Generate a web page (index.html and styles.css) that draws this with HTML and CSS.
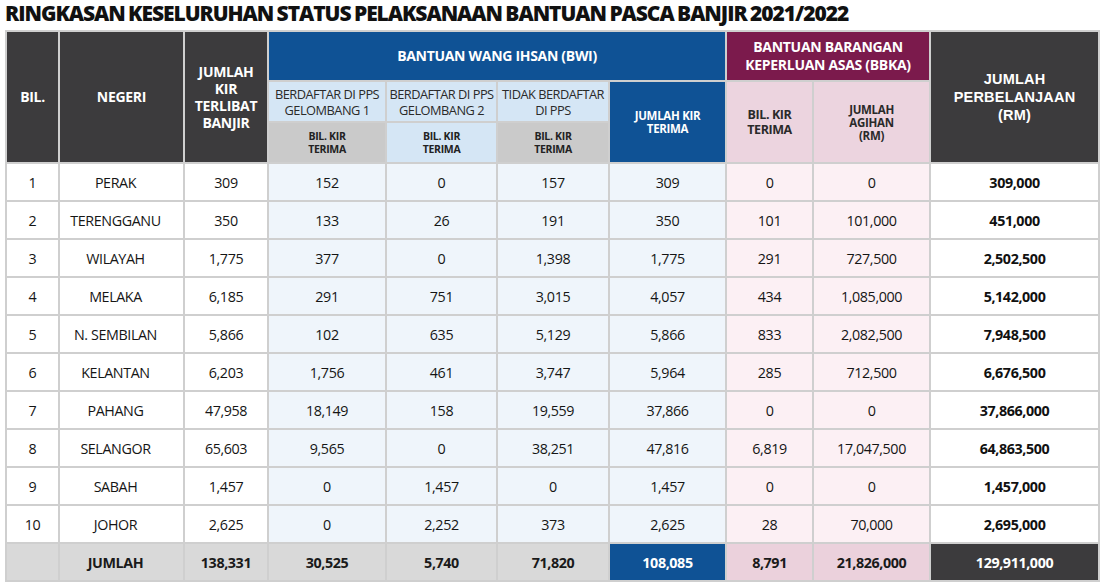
FILE: index.html
```html
<!DOCTYPE html>
<html lang="ms">
<head>
<meta charset="utf-8">
<title>Ringkasan Bantuan Pasca Banjir</title>
<link rel="stylesheet" href="styles.css">
</head>
<body>
<h1 class="title">RINGKASAN KESELURUHAN STATUS PELAKSANAAN BANTUAN PASCA BANJIR 2021/2022</h1>
<table class="tbl">
  <colgroup>
    <col style="width:53px"><col style="width:125px"><col style="width:84px">
    <col style="width:118px"><col style="width:111px"><col style="width:112px">
    <col style="width:117px"><col style="width:87px"><col style="width:117px">
    <col style="width:169px">
  </colgroup>
  <thead>
    <tr class="h1">
      <th rowspan="3" class="dark big">BIL.</th>
      <th rowspan="3" class="dark big">NEGERI</th>
      <th rowspan="3" class="dark big tall">JUMLAH<br>KIR<br>TERLIBAT<br>BANJIR</th>
      <th colspan="4" class="blue big">BANTUAN WANG IHSAN (BWI)</th>
      <th colspan="2" class="maroon big">BANTUAN BARANGAN<br>KEPERLUAN ASAS (BBKA)</th>
      <th rowspan="3" class="dark arial">JUMLAH<br>PERBELANJAAN<br>(RM)</th>
    </tr>
    <tr class="h2">
      <th class="lblue sub">BERDAFTAR DI PPS<br>GELOMBANG 1</th>
      <th class="lblue sub">BERDAFTAR DI PPS<br>GELOMBANG 2</th>
      <th class="lblue sub">TIDAK BERDAFTAR<br>DI PPS</th>
      <th rowspan="2" class="blue small">JUMLAH KIR<br>TERIMA</th>
      <th rowspan="2" class="pink mid">BIL. KIR<br>TERIMA</th>
      <th rowspan="2" class="pink small">JUMLAH<br>AGIHAN<br>(RM)</th>
    </tr>
    <tr class="h3">
      <th class="grey tiny">BIL. KIR<br>TERIMA</th>
      <th class="lblue tiny">BIL. KIR<br>TERIMA</th>
      <th class="grey tiny">BIL. KIR<br>TERIMA</th>
    </tr>
  </thead>
  <tbody>
    <tr><td>1</td><td class="neg">PERAK</td><td>309</td><td class="bt">152</td><td class="bt">0</td><td class="bt">157</td><td class="bt">309</td><td class="pt">0</td><td class="pt">0</td><td class="tot">309,000</td></tr>
    <tr><td>2</td><td class="neg">TERENGGANU</td><td>350</td><td class="bt">133</td><td class="bt">26</td><td class="bt">191</td><td class="bt">350</td><td class="pt">101</td><td class="pt">101,000</td><td class="tot">451,000</td></tr>
    <tr><td>3</td><td class="neg">WILAYAH</td><td>1,775</td><td class="bt">377</td><td class="bt">0</td><td class="bt">1,398</td><td class="bt">1,775</td><td class="pt">291</td><td class="pt">727,500</td><td class="tot">2,502,500</td></tr>
    <tr><td>4</td><td class="neg">MELAKA</td><td>6,185</td><td class="bt">291</td><td class="bt">751</td><td class="bt">3,015</td><td class="bt">4,057</td><td class="pt">434</td><td class="pt">1,085,000</td><td class="tot">5,142,000</td></tr>
    <tr><td>5</td><td class="neg">N. SEMBILAN</td><td>5,866</td><td class="bt">102</td><td class="bt">635</td><td class="bt">5,129</td><td class="bt">5,866</td><td class="pt">833</td><td class="pt">2,082,500</td><td class="tot">7,948,500</td></tr>
    <tr><td>6</td><td class="neg">KELANTAN</td><td>6,203</td><td class="bt">1,756</td><td class="bt">461</td><td class="bt">3,747</td><td class="bt">5,964</td><td class="pt">285</td><td class="pt">712,500</td><td class="tot">6,676,500</td></tr>
    <tr><td>7</td><td class="neg">PAHANG</td><td>47,958</td><td class="bt">18,149</td><td class="bt">158</td><td class="bt">19,559</td><td class="bt">37,866</td><td class="pt">0</td><td class="pt">0</td><td class="tot">37,866,000</td></tr>
    <tr><td>8</td><td class="neg">SELANGOR</td><td>65,603</td><td class="bt">9,565</td><td class="bt">0</td><td class="bt">38,251</td><td class="bt">47,816</td><td class="pt">6,819</td><td class="pt">17,047,500</td><td class="tot">64,863,500</td></tr>
    <tr><td>9</td><td class="neg">SABAH</td><td>1,457</td><td class="bt">0</td><td class="bt">1,457</td><td class="bt">0</td><td class="bt">1,457</td><td class="pt">0</td><td class="pt">0</td><td class="tot">1,457,000</td></tr>
    <tr><td>10</td><td class="neg">JOHOR</td><td>2,625</td><td class="bt">0</td><td class="bt">2,252</td><td class="bt">373</td><td class="bt">2,625</td><td class="pt">28</td><td class="pt">70,000</td><td class="tot">2,695,000</td></tr>
  </tbody>
  <tfoot>
    <tr><td></td><td class="neg">JUMLAH</td><td>138,331</td><td>30,525</td><td>5,740</td><td>71,820</td><td class="fblue">108,085</td><td class="fpink">8,791</td><td class="fpink">21,826,000</td><td class="fdark">129,911,000</td></tr>
  </tfoot>
</table>
</body>
</html>
```
FILE: styles.css
```css
html, body {
  margin: 0;
  padding: 0;
  background: #ffffff;
}
body {
  padding: 0 0 0 5px;
  font-family: "Open Sans", "Noto Sans", sans-serif;
  color: #1d1d1d;
}
.title {
  margin: 0;
  height: 30px;
  font-size: 21px;
  line-height: 27px;
  font-weight: 800;
  letter-spacing: -1.05px;
  word-spacing: -1px;
  color: #111;
  white-space: nowrap;
}
.tbl {
  border-collapse: collapse;
  table-layout: fixed;
  width: 1093px;
  border: 2px solid #c4c4c4;
}
.tbl th, .tbl td {
  border: 2px solid #cfcfcf;
  padding: 0;
  text-align: center;
  vertical-align: middle;
}
.h1 { height: 50px; }
.h2 { height: 41px; }
.h3 { height: 41px; }
.tbl tbody tr { height: 38px; }
.tbl tfoot tr { height: 38px; }

.dark { background: #3c3b3d; color: #fff; border-color: #8e8e8e; }
.blue { background: #0f5295; color: #fff; }
.maroon { background: #7b1a4c; color: #fff; }
.lblue { background: #d5e6f5; }
.grey { background: #cacaca; }
.pink { background: #ecd4df; }

.big {
  font-size: 14px;
  font-weight: 700;
  letter-spacing: -0.3px;
  line-height: 18px;
}
.tall { line-height: 17px; padding-bottom: 10px; }
.arial {
  font-family: "Liberation Sans", Arial, sans-serif;
  font-size: 14.5px;
  font-weight: 700;
  line-height: 18px;
  letter-spacing: 0.2px;
  padding-bottom: 4px;
}
.sub {
  font-size: 12.8px;
  font-weight: 400;
  letter-spacing: -0.5px;
  line-height: 16px;
  color: #2a2a2a;
}
.tiny {
  font-size: 10.5px;
  font-weight: 700;
  line-height: 13px;
  letter-spacing: -0.3px;
  color: #222;
}
.small {
  font-size: 11.5px;
  font-weight: 700;
  line-height: 13px;
  letter-spacing: -0.3px;
}
.pink.small { color: #2a2a2a; }
.mid {
  font-size: 12.5px;
  font-weight: 700;
  line-height: 15px;
  letter-spacing: -0.4px;
  color: #2a2a2a;
}

.tbl td {
  font-size: 14.3px;
  font-weight: 500;
  letter-spacing: -0.4px;
  color: #151515;
}
.tbl td.neg { padding-right: 12px; }
.tbl td.bt { background: #eff5fb; }
.tbl td.pt { background: #fcf0f4; }
.tbl td.tot { font-weight: 700; color: #111; }

.tbl tfoot td {
  background: #d9d9d9;
  font-weight: 700;
  color: #1a1a1a;
}
.tbl tfoot td.fblue { background: #0f5295; color: #fff; }
.tbl tfoot td.fpink { background: #ebd1dc; }
.tbl tfoot td.fdark { background: #3c3b3d; color: #fff; }
```
